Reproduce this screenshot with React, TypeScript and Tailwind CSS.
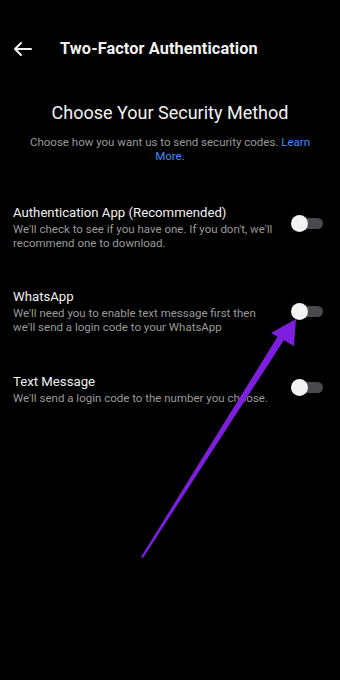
import React from "react";

function Toggle() {
  return (
    <div className="relative w-[32px] h-[18px] flex items-center shrink-0">
      <div className="absolute left-[4px] right-0 h-[11px] rounded-full bg-[#4a4a4c]" />
      <div className="absolute left-0 w-[17px] h-[17px] rounded-full bg-[#f2f2f2]" />
    </div>
  );
}

function Item({ title, lines, toggleTop }: { title: string; lines: string[]; toggleTop: string }) {
  return (
    <div className="flex pl-[13px] pr-[17px]">
      <div className="flex-1">
        <div className="text-[13.2px] leading-[18px] text-[#f0f0f0]">{title}</div>
        {lines.map((l, i) => (
          <div key={i} className="text-[11.5px] leading-[14px] text-[#9a9a9a] whitespace-nowrap">
            {l}
          </div>
        ))}
      </div>
      <div className={toggleTop}>
        <Toggle />
      </div>
    </div>
  );
}

export default function App() {
  return (
    <div
      className="relative w-[340px] h-[680px] bg-black overflow-hidden"
      style={{ fontFamily: "Roboto, 'Noto Sans', sans-serif" }}
    >
      <div className="flex items-center h-[24px] mt-[37px] pl-[13px]">
        <svg width="20" height="16" viewBox="0 0 20 16" fill="none" stroke="#f2f2f2" strokeWidth="2" strokeLinecap="round" strokeLinejoin="round">
          <path d="M18 8H2M8 2L2 8l6 6" />
        </svg>
        <div className="ml-[27px] text-[16.3px] font-bold text-[#f2f2f2] tracking-[0.1px]">Two-Factor Authentication</div>
      </div>

      <div className="mt-[41px] text-center text-[18px] leading-[22px] text-[#f2f2f2]">Choose Your Security Method</div>
      <div className="mt-[11px] px-[24px] text-center text-[11.5px] leading-[14px] text-[#9a9a9a]">
        Choose how you want us to send security codes. <span className="text-[#3f8ef0]">Learn</span>
        <br />
        <span className="text-[#3f8ef0]">More.</span>
      </div>

      <div className="mt-[41px]">
        <Item
          title="Authentication App (Recommended)"
          lines={["We'll check to see if you have one. If you don't, we'll", "recommend one to download."]}
          toggleTop="pt-[10px]"
        />
      </div>
      <div className="mt-[38px]">
        <Item
          title="WhatsApp"
          lines={["We'll need you to enable text message first then", "we'll send a login code to your WhatsApp"]}
          toggleTop="pt-[14px]"
        />
      </div>
      <div className="mt-[39px]">
        <Item
          title="Text Message"
          lines={["We'll send a login code to the number you choose."]}
          toggleTop="pt-[5px]"
        />
      </div>

      <svg className="absolute inset-0 pointer-events-none" width="340" height="680" viewBox="0 0 340 680">
        <polygon points="141,557 143,558 284,340 278,336" fill="#7e1fe0" />
        <polygon points="296,319 271,333 294,346" fill="#7e1fe0" />
      </svg>
    </div>
  );
}
